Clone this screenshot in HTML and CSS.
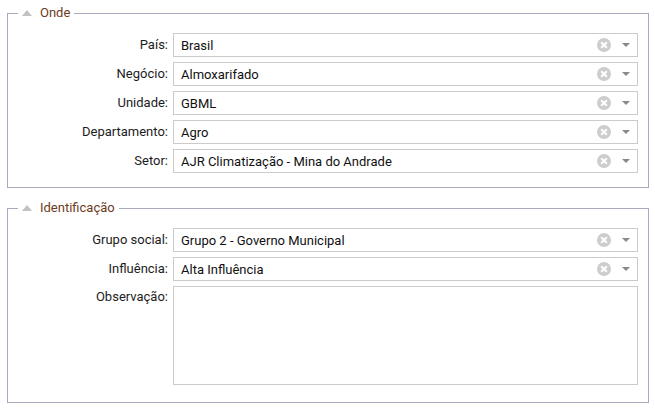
FILE: index.html
```html
<!DOCTYPE html>
<html lang="pt">
<head>
<meta charset="utf-8">
<link rel="stylesheet" href="styles.css">
</head>
<body>
<div class="page">
  <fieldset class="group">
    <legend class="legend"><span class="tri"></span><span class="legend-text">Onde</span></legend>
    <div class="form">
      <label class="label">País:</label>
      <div class="select"><span class="value">Brasil</span><span class="clear"></span><span class="arrow"></span></div>
      <label class="label">Negócio:</label>
      <div class="select"><span class="value">Almoxarifado</span><span class="clear"></span><span class="arrow"></span></div>
      <label class="label">Unidade:</label>
      <div class="select"><span class="value">GBML</span><span class="clear"></span><span class="arrow"></span></div>
      <label class="label">Departamento:</label>
      <div class="select"><span class="value">Agro</span><span class="clear"></span><span class="arrow"></span></div>
      <label class="label">Setor:</label>
      <div class="select"><span class="value">AJR Climatização - Mina do Andrade</span><span class="clear"></span><span class="arrow"></span></div>
    </div>
  </fieldset>
  <fieldset class="group second">
    <legend class="legend"><span class="tri"></span><span class="legend-text">Identificação</span></legend>
    <div class="form">
      <label class="label">Grupo social:</label>
      <div class="select"><span class="value">Grupo 2 - Governo Municipal</span><span class="clear"></span><span class="arrow"></span></div>
      <label class="label">Influência:</label>
      <div class="select"><span class="value">Alta Influência</span><span class="clear"></span><span class="arrow"></span></div>
      <label class="label label-top">Observação:</label>
      <div class="textarea"></div>
    </div>
  </fieldset>
</div>
</body>
</html>
```

FILE: styles.css
```css
html, body {
  margin: 0;
  padding: 0;
  background: #ffffff;
}
body {
  font-family: Roboto, "Liberation Sans", sans-serif;
  font-size: 13px;
  color: #222;
}
.page {
  padding: 5px 6px 0 7px;
}
.group {
  margin: 0;
  border: 1px solid #a9a9be;
  padding: 12px 10px 14px 10px;
  min-width: 0;
}
.group.second {
  margin-top: 12px;
  padding-bottom: 17px;
}
.legend {
  padding: 0 4px;
  height: 16px;
  line-height: 16px;
  display: flex;
  align-items: center;
}
.tri {
  width: 0;
  height: 0;
  border-left: 5px solid transparent;
  border-right: 5px solid transparent;
  border-bottom: 6px solid #c2c2c2;
  margin-right: 8px;
  margin-top: -1px;
}
.legend-text {
  color: #6e3b22;
}
.form {
  display: grid;
  grid-template-columns: 150px 1fr;
  column-gap: 5px;
  row-gap: 5px;
}
.label {
  text-align: right;
  line-height: 24px;
  color: #1c1c1c;
}
.label-top {
  line-height: 22px;
  align-self: start;
}
.select {
  height: 24px;
  box-sizing: border-box;
  border: 1px solid #cbcbcb;
  display: flex;
  align-items: center;
  padding: 0 7px;
  color: #111;
}
.value {
  flex: 1;
  white-space: nowrap;
  overflow: hidden;
}
.clear {
  width: 14px;
  height: 14px;
  border-radius: 50%;
  background: #cdcdcd;
  position: relative;
  margin-right: 11px;
}
.clear::before, .clear::after {
  content: "";
  position: absolute;
  left: 3px;
  top: 6px;
  width: 8px;
  height: 2px;
  background: #fff;
  transform: rotate(45deg);
}
.clear::after {
  transform: rotate(-45deg);
}
.arrow {
  width: 0;
  height: 0;
  border-left: 4px solid transparent;
  border-right: 4px solid transparent;
  border-top: 4px solid #8a8a8a;
  margin-right: 0px;
}
.textarea {
  height: 99px;
  box-sizing: border-box;
  border: 1px solid #cbcbcb;
}
```
